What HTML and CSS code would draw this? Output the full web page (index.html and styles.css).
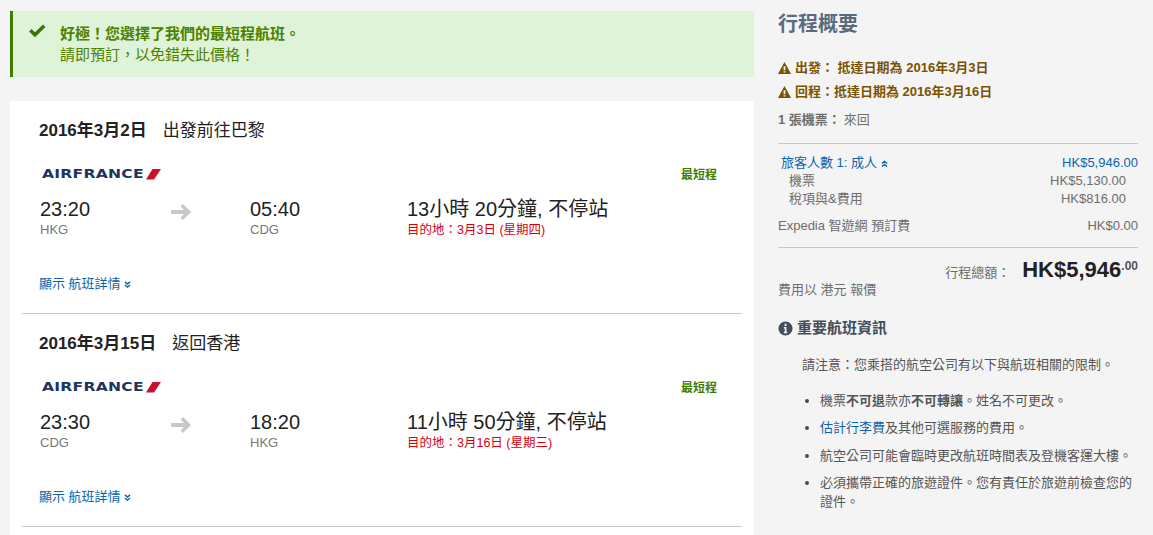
FILE: index.html
```html
<!DOCTYPE html>
<html lang="zh-Hant">
<head>
    <meta charset="UTF-8">
    <meta name="viewport" content="width=device-width, initial-scale=1.0">
    <title>行程概要</title>
    <link rel="stylesheet" href="styles.css">
</head>
<body>
    <div class="page">
        <main class="main">
            <div class="alert">
                <svg class="alert-icon" viewBox="0 0 18 14"><path d="M1 7.500l2.600-2.600 3.400 3.400 8-7.800 2.400 2.500-10.400 10.300z"/></svg>
                <div class="alert-text">
                    <div class="alert-title">好極！您選擇了我們的最短程航班。</div>
                    <div>請即預訂，以免錯失此價格！</div>
                </div>
            </div>

            <div class="card">
                <section class="leg">
                    <h2 class="leg-title"><b>2016年3月2日</b><span>出發前往巴黎</span></h2>
                    <div class="airline-row">
                        <div class="logo"><span class="logo-name">AIRFRANCE</span><svg class="logo-mark" viewBox="0 0 15 11"><path d="M6.500 0H15L8 10.500H0z"/></svg></div>
                        <div class="tag">最短程</div>
                    </div>
                    <div class="times">
                        <div class="stop"><div class="time">23:20</div><div class="code">HKG</div></div>
                        <svg class="arrow" viewBox="0 0 22 18"><path d="M13 1l8 8-8 8-2.500-2.500L14 11H1V7h13l-3.500-3.500z"/></svg>
                        <div class="stop"><div class="time">05:40</div><div class="code">CDG</div></div>
                        <div class="duration">
                            <div class="time">13小時 20分鐘, 不停站</div>
                            <div class="arrive">目的地：3月3日 (星期四)</div>
                        </div>
                    </div>
                    <a href="#" class="details">顯示 航班詳情 <svg class="chev" viewBox="0 0 8 8"><path d="M1 1l3 2.500L7 1M1 4.500L4 7l3-2.500"/></svg></a>
                </section>

                <section class="leg">
                    <h2 class="leg-title"><b>2016年3月15日</b><span>返回香港</span></h2>
                    <div class="airline-row">
                        <div class="logo"><span class="logo-name">AIRFRANCE</span><svg class="logo-mark" viewBox="0 0 15 11"><path d="M6.500 0H15L8 10.500H0z"/></svg></div>
                        <div class="tag">最短程</div>
                    </div>
                    <div class="times">
                        <div class="stop"><div class="time">23:30</div><div class="code">CDG</div></div>
                        <svg class="arrow" viewBox="0 0 22 18"><path d="M13 1l8 8-8 8-2.500-2.500L14 11H1V7h13l-3.500-3.500z"/></svg>
                        <div class="stop"><div class="time">18:20</div><div class="code">HKG</div></div>
                        <div class="duration">
                            <div class="time">11小時 50分鐘, 不停站</div>
                            <div class="arrive">目的地：3月16日 (星期三)</div>
                        </div>
                    </div>
                    <a href="#" class="details">顯示 航班詳情 <svg class="chev" viewBox="0 0 8 8"><path d="M1 1l3 2.500L7 1M1 4.500L4 7l3-2.500"/></svg></a>
                </section>
            </div>
        </main>

        <aside class="side">
            <h1 class="side-title">行程概要</h1>
            <p class="warn"><svg class="warn-icon" viewBox="0 0 14 13"><path fill-rule="evenodd" d="M7 0l7 13H0zM6 4.500v4.500h2V4.500zM6 10v1.500h2V10z"/></svg>出發： 抵達日期為 2016年3月3日</p>
            <p class="warn"><svg class="warn-icon" viewBox="0 0 14 13"><path fill-rule="evenodd" d="M7 0l7 13H0zM6 4.500v4.500h2V4.500zM6 10v1.500h2V10z"/></svg>回程：抵達日期為 2016年3月16日</p>
            <p class="tickets"><b>1 張機票：</b>來回</p>

            <div class="prices">
                <div class="price-row traveler">
                    <a href="#">旅客人數 1: 成人 <svg class="chev" viewBox="0 0 8 8"><path d="M1 4l3-2.500L7 4M1 7.500L4 5l3 2.500"/></svg></a>
                    <a href="#">HK$5,946.00</a>
                </div>
                <div class="price-row sub"><span>機票</span><span>HK$5,130.00</span></div>
                <div class="price-row sub"><span>稅項與&amp;費用</span><span>HK$816.00</span></div>
                <div class="price-row fee"><span>Expedia 智遊網 預訂費</span><span>HK$0.00</span></div>
            </div>

            <div class="total">
                <span class="total-label">行程總額：</span>
                <span class="total-amount">HK$5,946<sup>.00</sup></span>
            </div>
            <div class="currency">費用以 港元 報價</div>

            <h3 class="info-title"><svg class="info-icon" viewBox="0 0 16 16"><path fill-rule="evenodd" d="M8 .500a7.500 7.500 0 1 0 0 15 7.500 7.500 0 0 0 0-15zM7 3h2v2.200H7zM6.300 6.500H9v5h1V13H6.200v-1.500h1V8h-.9z"/></svg>重要航班資訊</h3>
            <p class="info-note">請注意：您乘搭的航空公司有以下與航班相關的限制。</p>
            <ul class="info-list">
                <li>機票<b>不可退</b>款亦<b>不可轉讓</b>。姓名不可更改。</li>
                <li><a href="#">估計行李費</a>及其他可選服務的費用。</li>
                <li>航空公司可能會臨時更改航班時間表及登機客運大樓。</li>
                <li>必須攜帶正確的旅遊證件。您有責任於旅遊前檢查您的證件。</li>
            </ul>
        </aside>
    </div>
</body>
</html>
```

FILE: styles.css
```css
html, body {
    margin: 0;
    padding: 0;
}
body {
    background-color: #f4f4f4;
    color: #333;
    font-family: "Liberation Sans", "Noto Sans CJK TC", sans-serif;
    font-size: 13px;
}
a {
    color: #0b64ad;
    text-decoration: none;
}
h1, h2, h3, p, ul {
    margin: 0;
    padding: 0;
}
.page {
    display: flex;
    box-sizing: border-box;
    height: 535px;
    overflow: hidden;
    padding: 11px 15px 0 10px;
}
.main {
    display: flex;
    flex-direction: column;
    width: 744px;
    flex: none;
}
.side {
    flex: 1;
    margin-left: 24px;
    margin-top: -1px;
    color: #6d6d6d;
}

/* alert */
.alert {
    display: flex;
    height: 66px;
    box-sizing: border-box;
    padding: 12px 0 0 15px;
    background-color: #dff3d8;
    border-left: 3px solid #3f7c00;
    color: #4c8200;
    font-size: 15px;
    line-height: 21px;
}
.alert-icon {
    width: 18px;
    height: 14px;
    margin-top: 1px;
    fill: #3f7300;
}
.alert-text {
    margin-left: 14px;
}
.alert-title {
    font-weight: bold;
}

/* flights */
.card {
    flex: 1;
    margin-top: 24px;
    padding: 0 12px;
    background-color: #fff;
}
.leg {
    box-sizing: border-box;
    height: 213px;
    border-bottom: 1px solid #c8c8c8;
    padding: 18px 0 0 17px;
}
.leg-title {
    font-size: 17px;
    font-weight: normal;
    line-height: 24px;
    color: #222;
}
.leg-title b {
    margin-right: 16px;
}
.airline-row {
    display: flex;
    justify-content: space-between;
    align-items: center;
    margin-top: 23px;
    height: 16px;
    padding: 0 25px 0 3px;
}
.logo {
    display: flex;
    align-items: center;
}
.logo-name {
    display: inline-block;
    width: 104px;
    font-family: "DejaVu Sans", sans-serif;
    font-weight: bold;
    font-size: 13px;
    line-height: 16px;
    color: #1d3461;
    letter-spacing: 0.200px;
    transform: scaleX(1.2);
    transform-origin: left center;
}
.logo-mark {
    width: 15px;
    height: 11px;
    fill: #c8102e;
}
.tag {
    margin-bottom: 2px;
    color: #3f7c00;
    font-size: 12px;
    font-weight: bold;
}
.times {
    display: flex;
    align-items: flex-start;
    margin-top: 16px;
    padding-left: 1px;
}
.stop {
    width: 130px;
}
.arrow {
    width: 22px;
    height: 18px;
    margin: 5px 58px 0 0;
    fill: #c8c8c8;
}
.stop + .arrow + .stop {
    width: 157px;
}
.time {
    font-size: 20px;
    line-height: 23px;
    color: #222;
}
.code {
    font-size: 13px;
    line-height: 18px;
    color: #777;
}
.arrive {
    font-size: 12.500px;
    line-height: 18px;
    color: #d8000c;
}
.details {
    display: inline-block;
    margin-top: 36px;
    font-size: 13px;
    line-height: 18px;
}
.chev {
    width: 7px;
    height: 7px;
    fill: none;
    stroke: #0b64ad;
    stroke-width: 1.500;
}

/* summary */
.side-title {
    font-size: 20px;
    line-height: 28px;
    font-weight: bold;
    color: #5a6b7d;
}
.warn {
    margin-top: 6px;
    display: flex;
    align-items: center;
    color: #7a5200;
    font-weight: bold;
    font-size: 13px;
    line-height: 18px;
}
.side-title + .warn {
    margin-top: 21px;
}
.warn-icon {
    width: 13px;
    height: 12px;
    margin-right: 4px;
    fill: #7a5200;
}
.tickets {
    margin-top: 10px;
    line-height: 18px;
}
.tickets b {
    margin-right: 3px;
}
.prices {
    margin-top: 14px;
    padding-top: 10px;
    border-top: 1px solid #c8c8c8;
    border-bottom: 1px solid #c8c8c8;
}
.price-row {
    display: flex;
    justify-content: space-between;
    line-height: 18px;
}
.traveler {
    padding-left: 3px;
}
.sub {
    padding: 0 12px 0 11px;
}
.fee {
    margin-top: 9px;
    padding-bottom: 12px;
}
.total {
    display: flex;
    justify-content: flex-end;
    align-items: baseline;
    height: 24px;
    margin-top: 9px;
}
.total-label {
    margin-right: 12px;
}
.total-amount {
    font-size: 22px;
    font-weight: bold;
    color: #222;
}
.total-amount sup {
    font-size: 12px;
    font-weight: bold;
    color: #555;
    vertical-align: 7px;
    line-height: 0;
}
.currency {
    line-height: 18px;
}
.info-title {
    display: flex;
    align-items: center;
    margin-top: 19px;
    font-size: 15px;
    line-height: 20px;
    color: #3f4d5c;
}
.info-icon {
    width: 15px;
    height: 15px;
    margin-right: 4px;
    fill: #3f4d5c;
}
.info-note {
    margin-top: 18px;
    padding-left: 24px;
    line-height: 18px;
    color: #555;
}
.info-list {
    margin-top: 17px;
    padding-left: 42px;
    line-height: 19px;
    color: #555;
}
.info-list li {
    margin-bottom: 8.400px;
}
.info-list li::marker {
    color: #3f4d5c;
}
```
